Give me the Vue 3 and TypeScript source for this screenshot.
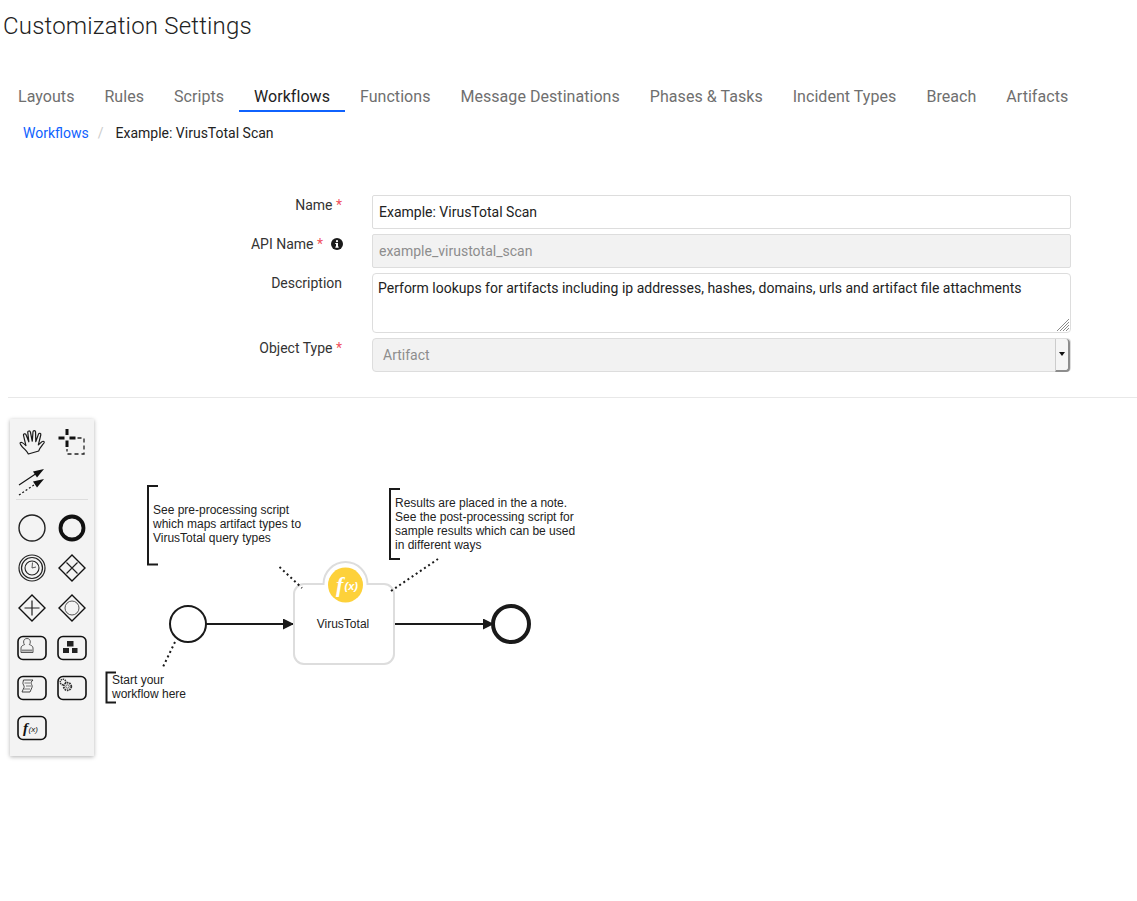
<script setup lang="ts">
const tabs = ['Layouts', 'Rules', 'Scripts', 'Workflows', 'Functions', 'Message Destinations', 'Phases & Tasks', 'Incident Types', 'Breach', 'Artifacts']
const activeTab = 'Workflows'

const note1 = ['See pre-processing script', 'which maps artifact types to', 'VirusTotal query types']
const note2 = ['Results are placed in the a note.', 'See the post-processing script for', 'sample results which can be used', 'in different ways']
const note3 = ['Start your', 'workflow here']
</script>

<template>
  <div class="page">
    <h1 class="title">Customization Settings</h1>

    <nav class="tabs">
      <a v-for="tab in tabs" :key="tab" class="tab" :class="{ active: tab === activeTab }">{{ tab }}</a>
    </nav>

    <div class="crumbs">
      <a class="crumb-link">Workflows</a>
      <span class="crumb-sep">/</span>
      <span>Example: VirusTotal Scan</span>
    </div>

    <form class="form">
      <label class="lbl">Name <em>*</em></label>
      <input class="ctl" value="Example: VirusTotal Scan" />

      <label class="lbl">API Name <em>*</em>
        <svg class="info" width="12" height="12" viewBox="0 0 12 12">
          <circle cx="6" cy="6" r="6" fill="#1a1a1a" />
          <rect x="5" y="5" width="2" height="4.4" fill="#fff" />
          <rect x="4.2" y="5" width="1.6" height="1" fill="#fff" />
          <rect x="4.2" y="8.6" width="3.6" height="1" fill="#fff" />
          <circle cx="6" cy="3.2" r="1.1" fill="#fff" />
        </svg>
      </label>
      <input class="ctl off" value="example_virustotal_scan" disabled />

      <label class="lbl">Description</label>
      <div class="area-wrap">
        <textarea class="ctl area">Perform lookups for artifacts including ip addresses, hashes, domains, urls and artifact file attachments</textarea>
        <svg class="grip" width="14" height="14" viewBox="0 0 14 14">
          <path d="M1 13 13 1M4 13 13 4M7 13 13 7M10 13 13 10" stroke="#8a8a8a" stroke-width="1" fill="none" />
        </svg>
      </div>

      <label class="lbl">Object Type <em>*</em></label>
      <div class="ctl off sel">
        <span class="sel-val">Artifact</span>
        <span class="sel-btn"><i></i></span>
      </div>
    </form>

    <hr class="rule" />

    <section class="canvas">
      <aside class="palette">
        <div class="pal-grid">
          <!-- hand -->
          <svg class="ico tall" viewBox="0 0 38 38">
            <path transform="translate(-0.5 -1.500) scale(1.220 1.100)" d="M13 29.500c-1-2.500-3-4-5-6.500-1.200-1.500-2.300-3-1.600-3.700 .9-.9 2.600 .3 4.600 2.700L9 12.500c-.3-1.300 1.500-1.900 2.100-.5l2.300 6.500L12.500 9.800c-.1-1.500 1.800-1.700 2.200-.2l1.500 8.400 .6-8.700c.1-1.400 2-1.400 2.100 0l.2 9 2.200-6.800c.5-1.300 2.200-.8 1.900 .6l-2 9.200 3-3c1-.9 2.300 .1 1.600 1.200-1.700 2.500-3.600 4.500-4.300 7.300z" fill="none" stroke="#1a1a1a" stroke-width="1" stroke-linejoin="round" />
          </svg>
          <!-- lasso -->
          <svg class="ico tall" viewBox="0 0 38 38">
            <path d="M5.500 15h6M16.500 15h6M14 6v6M14 17.500v6.500" stroke="#111" stroke-width="3" fill="none" />
            <path d="M24.500 15H31V31H14V26" stroke="#222" stroke-width="1.300" stroke-dasharray="4 3" fill="none" />
          </svg>
          <!-- connect -->
          <svg class="ico tall" viewBox="0 0 38 38">
            <path d="M6 24 24 12" stroke="#111" stroke-width="1.200" />
            <path d="M31 8 20 10.500l4 6z" fill="#111" />
            <path d="M6 34 24 22" stroke="#111" stroke-width="1.200" stroke-dasharray="2 2" />
            <path d="M31 18 20 20.500l4 6z" fill="#111" />
          </svg>
          <span></span>
        </div>
        <div class="pal-sep"></div>
        <div class="pal-grid rows">
          <svg class="ico" viewBox="0 0 38 40"><circle cx="19" cy="20" r="13" fill="none" stroke="#222" stroke-width="1.400" /></svg>
          <svg class="ico" viewBox="0 0 38 40"><circle cx="19" cy="20" r="11.500" fill="none" stroke="#111" stroke-width="3.800" /></svg>
          <!-- timer -->
          <svg class="ico" viewBox="0 0 38 40">
            <circle cx="19" cy="20" r="13" fill="none" stroke="#222" stroke-width="1.200" />
            <circle cx="19" cy="20" r="10.500" fill="none" stroke="#222" stroke-width="1.200" />
            <circle cx="19" cy="20" r="7" fill="none" stroke="#222" stroke-width="1.100" />
            <path d="M19.500 14.500 19 20l4-1" fill="none" stroke="#333" stroke-width=".8" />
          </svg>
          <!-- xor gateway -->
          <svg class="ico" viewBox="0 0 38 40">
            <path d="M19 7 32 20 19 33 6 20z" fill="none" stroke="#111" stroke-width="1.400" />
            <path d="M13.500 14.500 24.500 25.500M24.500 14.500 13.500 25.500" stroke="#222" stroke-width="1.200" />
          </svg>
          <!-- parallel gateway -->
          <svg class="ico" viewBox="0 0 38 40">
            <path d="M19 7 32 20 19 33 6 20z" fill="none" stroke="#111" stroke-width="1.400" />
            <path d="M19 12.500v15M11.500 20h15" stroke="#222" stroke-width="1.200" />
          </svg>
          <!-- inclusive gateway -->
          <svg class="ico" viewBox="0 0 38 40">
            <path d="M19 7 32 20 19 33 6 20z" fill="none" stroke="#111" stroke-width="1.400" />
            <circle cx="19" cy="20" r="7" fill="none" stroke="#555" stroke-width="1" />
          </svg>
          <!-- user task -->
          <svg class="ico" viewBox="0 0 38 40">
            <rect x="5" y="8.500" width="28" height="23" rx="5" fill="none" stroke="#111" stroke-width="1.600" />
            <path d="M14 10.500c2.200 0 3.300 1.500 3.300 3.500 0 1.200-.5 2-1 2.600 1.800 .6 3.700 1.500 3.700 3.400v4.500H8v-4.500c0-1.900 1.900-2.800 3.600-3.400-.6-.6-1-1.400-1-2.600 0-2 1.200-3.500 3.400-3.500z" fill="none" stroke="#444" stroke-width=".9" />
            <path d="M8.500 22.500h11" stroke="#888" stroke-width="2" />
          </svg>
          <!-- sub process -->
          <svg class="ico" viewBox="0 0 38 40">
            <rect x="5" y="8.500" width="28" height="23" rx="5" fill="none" stroke="#111" stroke-width="1.600" />
            <path d="M14 13h6.500v5.500H14zM10 20h6v5h-6zM19 20h5.500v5H19z" fill="#222" />
          </svg>
          <!-- script task -->
          <svg class="ico" viewBox="0 0 38 40">
            <rect x="5" y="8.500" width="28" height="23" rx="5" fill="none" stroke="#111" stroke-width="1.600" />
            <path d="M10.500 12H20l-1.800 2c-1 1.300 1.800 3.500 .8 5.300L17 24H9l2-4.500c.9-1.900-1.800-3.200-1-5.200z" fill="none" stroke="#333" stroke-width=".9" />
            <path d="M11.500 15h5.500M13 18h5M11 21h6" stroke="#555" stroke-width=".8" />
          </svg>
          <!-- service task -->
          <svg class="ico" viewBox="0 0 38 40">
            <rect x="5" y="8.500" width="28" height="23" rx="5" fill="none" stroke="#111" stroke-width="1.600" />
            <circle cx="10" cy="14" r="2.800" fill="none" stroke="#333" stroke-width="1.500" stroke-dasharray="1.400 .7" />
            <circle cx="14.500" cy="18.500" r="3.800" fill="#f3f3f3" stroke="#333" stroke-width="1.800" stroke-dasharray="1.600 .8" />
            <circle cx="14.500" cy="18.500" r="1.700" fill="none" stroke="#333" stroke-width=".7" />
          </svg>
          <!-- function -->
          <svg class="ico" viewBox="0 0 38 40">
            <rect x="5" y="8.500" width="28" height="23" rx="5" fill="none" stroke="#111" stroke-width="1.600" />
            <text x="10" y="24.500" class="fx-big">f</text>
            <text x="15.500" y="23.500" class="fx-small">(x)</text>
          </svg>
        </div>
      </aside>

      <svg class="diagram" viewBox="0 398 1137 503" width="1137" height="503">
        <defs>
          <marker id="head" markerWidth="12" markerHeight="11" refX="11" refY="5.500" orient="auto" markerUnits="userSpaceOnUse">
            <path d="M0 0 11 5.500 0 11z" fill="#1a1a1a" />
          </marker>
        </defs>

        <!-- annotations -->
        <path d="M158 486h-10v78.500h10M400 489h-10v70h10M116 672.500h-9.500v30h9.500" fill="none" stroke="#1a1a1a" stroke-width="2" />
        <text class="note"><tspan v-for="(line, i) in note1" :key="line" x="153" :y="514 + i * 14">{{ line }}</tspan></text>
        <text class="note"><tspan v-for="(line, i) in note2" :key="line" x="395" :y="507 + i * 14">{{ line }}</tspan></text>
        <text class="note"><tspan v-for="(line, i) in note3" :key="line" x="112" :y="684 + i * 14">{{ line }}</tspan></text>

        <!-- flow -->
        <path d="M206 624H294" stroke="#1a1a1a" stroke-width="2" marker-end="url(#head)" />
        <path d="M394 624H494" stroke="#1a1a1a" stroke-width="2" marker-end="url(#head)" />
        <circle cx="188" cy="624" r="18" fill="#fff" stroke="#1a1a1a" stroke-width="2" />
        <circle cx="511" cy="624" r="18" fill="#fff" stroke="#1a1a1a" stroke-width="4" />

        <!-- function task -->
        <path d="M304 584h19.500a22 22 0 0 1 44 0H384a10 10 0 0 1 10 10v60a10 10 0 0 1-10 10H304a10 10 0 0 1-10-10v-60a10 10 0 0 1 10-10z" fill="#fff" stroke="#ddd" stroke-width="2" />
        <circle cx="345.500" cy="585" r="17.500" fill="#fdd13a" />
        <text x="336" y="592" class="badge-f">f</text>
        <text x="344.500" y="590" class="badge-x">(x)</text>
        <text x="343" y="628" text-anchor="middle" class="note">VirusTotal</text>

        <path d="M279.500 567 302 588M391 591 438 559M175 642 162 669" fill="none" stroke="#1a1a1a" stroke-width="2" stroke-dasharray="2 3" />
      </svg>
    </section>
  </div>
</template>

<style scoped>
.page {
  font-family: Roboto, "Noto Sans", sans-serif;
  color: #222;
  font-size: 14px;
  width: 1137px;
}
.title {
  margin: 0;
  padding: 11px 0 0 3px;
  font-size: 24px;
  line-height: 30px;
  font-weight: 300;
  letter-spacing: 0.18px;
}
.tabs {
  display: flex;
  margin: 39px 0 0 3px;
}
.tab {
  padding: 2px 15px 0;
  height: 32px;
  line-height: 30px;
  font-size: 16px;
  color: #6f6f6f;
  box-sizing: border-box;
  letter-spacing: 0.05px;
}
.tab.active {
  color: #222;
  border-bottom: 2px solid #0f62fe;
}
.crumbs {
  display: flex;
  align-items: center;
  padding: 12px 0 0 23px;
  line-height: 18px;
}
.crumb-link {
  color: #0f62fe;
}
.crumb-sep {
  color: #ccc;
  margin: 0 12px 0 9px;
}
.form {
  display: grid;
  grid-template-columns: 342px 699px;
  column-gap: 30px;
  row-gap: 5px;
  margin-top: 53px;
}
.lbl {
  text-align: right;
  padding-top: 2px;
  line-height: 16px;
  color: #333;
}
.lbl em {
  font-style: normal;
  color: #f0525e;
}
.info {
  vertical-align: -1px;
  margin: 0 -1px 0 8px;
}
.ctl {
  box-sizing: border-box;
  width: 699px;
  height: 34px;
  border: 1px solid #ddd;
  border-radius: 2px;
  padding: 0 6px;
  font: inherit;
  color: #222;
  background: #fff;
  outline: none;
  margin: 0;
}
.off {
  background: #f2f2f2;
  color: #8d8d8d;
}
.area-wrap {
  position: relative;
  height: 60px;
}
.area {
  display: block;
  height: 60px;
  padding: 5px 5px;
  line-height: 18px;
  border-radius: 4px;
  resize: none;
}
.grip {
  position: absolute;
  right: 1px;
  bottom: 1px;
}
.sel {
  display: flex;
  align-items: center;
  justify-content: space-between;
  padding: 0 0 0 10px;
  border-radius: 4px;
}
.sel-btn {
  display: flex;
  align-items: center;
  justify-content: center;
  width: 15px;
  height: 33px;
  box-sizing: border-box;
  background: #f5f5f5;
  border-left: 1px solid #ccc;
  border-right: 2px solid #8d8d8d;
  border-bottom: 2px solid #8d8d8d;
  border-radius: 0 4px 4px 0;
}
.sel-btn i {
  border-left: 3.500px solid transparent;
  border-right: 3.500px solid transparent;
  border-top: 4px solid #111;
}
.rule {
  margin: 25px 0 0 8px;
  border: 0;
  border-top: 1px solid #e8e8e8;
}
.canvas {
  position: relative;
  height: 503px;
}
.diagram {
  display: block;
}
.palette {
  position: absolute;
  left: 10px;
  top: 21px;
  width: 84px;
  height: 337px;
  box-sizing: border-box;
  padding: 4px 0 0 3px;
  background: #f3f3f3;
  box-shadow: 0 1px 4px rgba(0, 0, 0, 0.3);
}
.pal-grid {
  display: grid;
  grid-template-columns: 40px 38px;
  grid-auto-rows: 38px;
}
.pal-grid.rows {
  grid-auto-rows: 40px;
  margin-top: 8px;
}
.pal-sep {
  height: 1px;
  margin: 0 6px 0 3px;
  background: #ddd;
}
.ico {
  display: block;
  width: 38px;
  height: 40px;
}
.ico.tall {
  height: 38px;
}
.fx-big {
  font: italic 700 15px "Liberation Serif", serif;
  fill: #111;
}
.fx-small {
  font: italic 400 8px "Liberation Sans", sans-serif;
  fill: #111;
}
.note {
  font-family: "Liberation Sans", Arial, sans-serif;
  font-size: 12px;
  fill: #222;
}
.badge-f {
  font: italic 700 22px "Liberation Serif", serif;
  fill: #fff;
}
.badge-x {
  font: italic 700 11px "Liberation Sans", sans-serif;
  fill: #fff;
}
</style>

<style>
html, body {
  background: #fff;
}
</style>
